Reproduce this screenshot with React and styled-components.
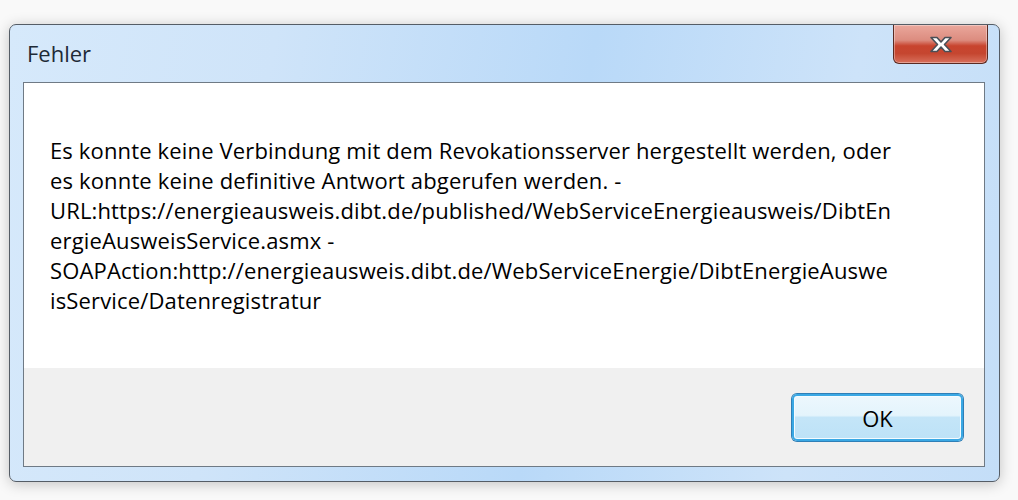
import styled, { createGlobalStyle } from "styled-components";

const Global = createGlobalStyle`
  html, body {
    margin: 0;
    padding: 0;
    background: #f9f9f9;
  }
  * {
    box-sizing: border-box;
  }
`;

const Page = styled.div`
  width: 1018px;
  height: 500px;
  padding: 24px 18px 18px 9px;
  font-family: "Open Sans", "Noto Sans", sans-serif;
`;

const Window = styled.div`
  width: 991px;
  height: 458px;
  display: flex;
  flex-direction: column;
  border: 1px solid #555d66;
  border-radius: 7px;
  background: linear-gradient(
    100deg,
    #d6e9fb 0%,
    #cfe4f9 25%,
    #b9d9f8 55%,
    #cde3f9 80%,
    #c4def8 100%
  );
  box-shadow: 0 2px 14px rgba(0, 0, 0, 0.22);
  padding: 0 14px 14px 13px;
`;

const TitleBar = styled.div`
  height: 57px;
  display: flex;
  justify-content: space-between;
  align-items: flex-start;
  margin-right: -3px;
`;

const Title = styled.div`
  padding: 13px 0 0 4px;
  font-size: 22px;
  color: #1e2a36;
`;

const CloseButton = styled.div`
  width: 95px;
  height: 39px;
  display: flex;
  align-items: center;
  justify-content: center;
  border: 1px solid #5a2a22;
  border-top: none;
  border-radius: 0 0 6px 6px;
  background: linear-gradient(
    180deg,
    #eaa79c 0%,
    #dc8c7f 40%,
    #c8442e 55%,
    #c54630 75%,
    #d8705c 100%
  );
  box-shadow: inset 0 0 0 1px rgba(255, 255, 255, 0.35);
`;

const Client = styled.div`
  flex: 1;
  display: flex;
  flex-direction: column;
  border: 1px solid #6f7a85;
`;

const Body = styled.div`
  flex: 1;
  background: #ffffff;
  padding: 52px 0 0 26px;
`;

const Message = styled.p`
  margin: 0;
  font-size: 22px;
  line-height: 30px;
  color: #000000;
  white-space: pre;
  letter-spacing: 0.15px;
`;

const Footer = styled.div`
  height: 98px;
  background: #f0f0f0;
  display: flex;
  justify-content: flex-end;
  padding: 26px 21px 0 0;
`;

const Button = styled.div`
  width: 171px;
  height: 47px;
  display: flex;
  align-items: center;
  justify-content: center;
  border: 2px solid #3aa8e4;
  border-radius: 5px;
  background: linear-gradient(180deg, #ecf7fd 0%, #e4f4fc 45%, #c4e5f8 50%, #bde2f7 100%);
  box-shadow: inset 0 0 0 1px #f4fbff, 0 0 0 1px #2f7fb7;
  font-size: 22px;
  color: #000000;
`;

const lines = [
  "Es konnte keine Verbindung mit dem Revokationsserver hergestellt werden, oder",
  "es konnte keine definitive Antwort abgerufen werden. -",
  "URL:https://energieausweis.dibt.de/published/WebServiceEnergieausweis/DibtEn",
  "ergieAusweisService.asmx -",
  "SOAPAction:http://energieausweis.dibt.de/WebServiceEnergie/DibtEnergieAuswe",
  "isService/Datenregistratur",
];

export default function App() {
  return (
    <Page>
      <Global />
      <Window>
        <TitleBar>
          <Title>Fehler</Title>
          <CloseButton>
            <svg width="24" height="17" viewBox="0 0 24 17">
              <path
                d="M2 1.5 H8 L12 6 L16 1.5 H22 L15.5 8.5 L22 15.5 H16 L12 11 L8 15.5 H2 L8.5 8.5 Z"
                fill="#ffffff"
                stroke="#4a4f57"
                strokeWidth="1.6"
                strokeLinejoin="round"
              />
            </svg>
          </CloseButton>
        </TitleBar>
        <Client>
          <Body>
            <Message>{lines.join("\n")}</Message>
          </Body>
          <Footer>
            <Button>OK</Button>
          </Footer>
        </Client>
      </Window>
    </Page>
  );
}
